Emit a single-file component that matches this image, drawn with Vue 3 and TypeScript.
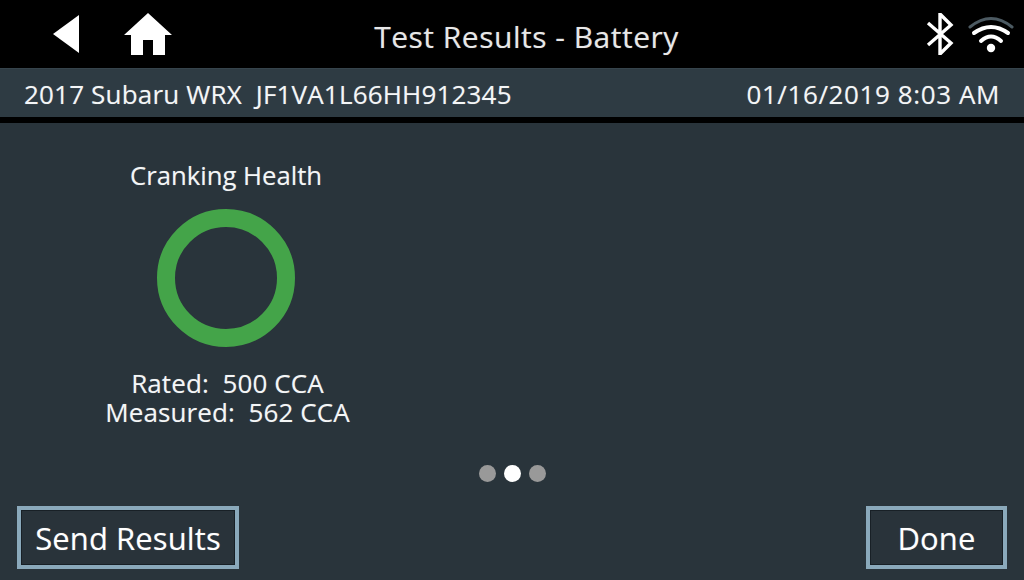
<script setup lang="ts">
const vehicle = '2017 Subaru WRX\u00a0\u00a0JF1VA1L66HH912345'
const stamp = '01/16/2019 8:03 AM'
const dots = [false, true, false]
</script>

<template>
  <div class="screen">
    <header class="topbar">
      <div class="nav">
        <svg class="back" width="28" height="40" viewBox="0 0 28 40">
          <path d="M1 20 L27 1 V39 Z" fill="#fff" />
        </svg>
        <svg class="home" width="48" height="42" viewBox="0 0 48 42">
          <path d="M24 0 L48 22 H41 V42 H29 V27 H19 V42 H7 V22 H0 Z" fill="#fff" />
        </svg>
      </div>
      <div class="title">Test Results - Battery</div>
      <div class="status">
        <svg width="28" height="42" viewBox="0 0 28 42" fill="none" stroke="#fff" stroke-width="3.4">
          <path d="M2 10 L25 30 L14 41 V1 L25 12 L2 32" />
        </svg>
        <svg width="46" height="38" viewBox="0 0 46 38" fill="none" stroke-linecap="round">
          <path d="M2 12 Q23 -5 44 12" stroke="#4c5a62" stroke-width="3" />
          <path d="M6 18 Q23 6 40 18" stroke="#fff" stroke-width="4" />
          <path d="M13 26 Q23 17 33 26" stroke="#fff" stroke-width="4" />
          <circle cx="23" cy="33" r="4.2" fill="#fff" />
        </svg>
      </div>
    </header>

    <div class="infobar">
      <span class="vehicle">{{ vehicle }}</span>
      <span class="stamp">{{ stamp }}</span>
    </div>

    <main class="content">
      <section class="health">
        <div class="health-title">Cranking Health</div>
        <div class="ring"></div>
        <div class="values">
          <div>Rated:&nbsp; 500 CCA</div>
          <div>Measured:&nbsp; 562 CCA</div>
        </div>
      </section>
      <div class="pager">
        <span v-for="(on, i) in dots" :key="i" :class="['dot', { on }]"></span>
      </div>
      <footer class="actions">
        <button class="btn">Send Results</button>
        <button class="btn done">Done</button>
      </footer>
    </main>
  </div>
</template>

<style>
html,
body {
  margin: 0;
  background: #29343b;
}
</style>

<style scoped>
.screen {
  width: 1024px;
  height: 580px;
  display: flex;
  flex-direction: column;
  overflow: hidden;
  color: #f4f6f7;
  font-family: "Open Sans", sans-serif;
  background: #29343b;
  text-shadow: 0 0 1px rgba(255, 255, 255, 0.35);
}

.topbar {
  height: 68px;
  flex: none;
  background: #000;
  display: grid;
  grid-template-columns: 1fr auto 1fr;
  align-items: center;
}

.nav {
  display: flex;
  align-items: center;
  padding-left: 52px;
  gap: 44px;
}

.title {
  font-size: 30px;
  color: #e8e8e8;
  letter-spacing: 0.5px;
  padding: 5px 0 0 29px;
  height: 63px;
  line-height: 63px;
}

.status {
  display: flex;
  justify-content: flex-end;
  align-items: center;
  gap: 14px;
  padding-right: 10px;
}

.infobar {
  height: 49px;
  flex: none;
  box-sizing: border-box;
  display: flex;
  justify-content: space-between;
  align-items: center;
  padding: 2px 24px 0;
  font-size: 26px;
  background: #2e3b43;
  border-top: 1px solid #36444c;
}

.vehicle {
  letter-spacing: 0.18px;
}

.stamp {
  letter-spacing: 0.6px;
}

.content {
  flex: 1;
  display: flex;
  flex-direction: column;
  border-top: 6px solid #000;
}

.health {
  width: 245px;
  margin-left: 105px;
  padding-top: 34px;
  display: flex;
  flex-direction: column;
  align-items: center;
  font-size: 26px;
}

.health-title {
  font-size: 25.7px;
  line-height: 38px;
  margin-right: 3px;
}

.ring {
  width: 138px;
  height: 138px;
  margin: 14px 3px 0 0;
  box-sizing: border-box;
  border: 18.5px solid #44a449;
  border-radius: 50%;
}

.values {
  margin-top: 22px;
  line-height: 29px;
  text-align: center;
  white-space: nowrap;
  letter-spacing: 0.1px;
}

.pager {
  display: flex;
  justify-content: center;
  gap: 8px;
  margin-top: 38px;
}

.dot {
  width: 17px;
  height: 17px;
  border-radius: 50%;
  background: #999;
}

.dot.on {
  background: #fff;
}

.actions {
  display: flex;
  justify-content: space-between;
  padding: 0 17px;
  margin-top: 24px;
}

.btn {
  height: 63px;
  width: 222px;
  box-sizing: border-box;
  padding: 0;
  border: 4px solid #8aa9bb;
  outline: none;
  background: #29333a;
  box-shadow: inset 0 0 0 1px #182026;
  color: #fff;
  font-family: inherit;
  font-size: 31px;
  letter-spacing: 0.1px;
  text-shadow: inherit;
}

.btn.done {
  width: 141px;
}
</style>
